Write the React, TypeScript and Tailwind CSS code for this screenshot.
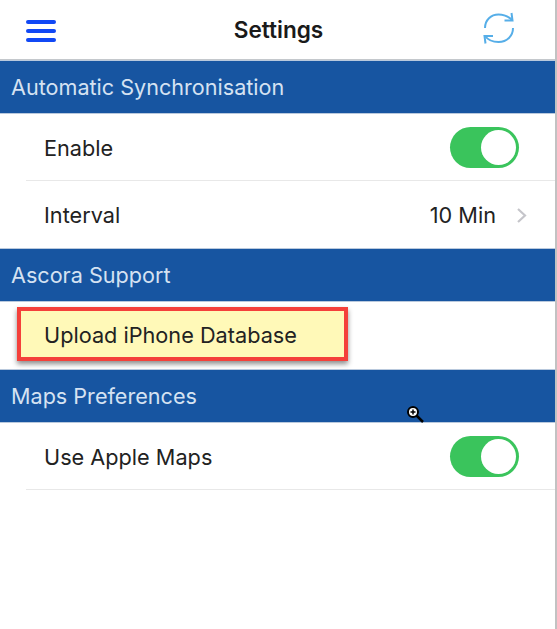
import React from 'react'

function Toggle() {
  return (
    <div className="mt-[1px] flex h-[41px] w-[69px] items-center justify-end rounded-full bg-[#3ac45c] p-[3px]">
      <div className="h-[35px] w-[35px] rounded-full bg-white" />
    </div>
  )
}

function SectionHeader({ title }: { title: string }) {
  return (
    <div className="flex h-[54px] items-center border-y border-[#b9c9dd] bg-[#1755a1] pl-[11px] text-[21.6px] text-[#d5e2f2]">
      {title}
    </div>
  )
}

export default function App() {
  return (
    <div className="relative h-[629px] w-[557px] overflow-hidden border-r-2 border-[#c2c2c2] bg-white font-['Inter','Liberation_Sans',sans-serif] text-[#222]">
      <header className="grid h-[60px] grid-cols-3 items-center border-b border-[#c4c8cc] pr-[40px] pl-[26px]">
        <svg width="30" height="24" viewBox="0 0 30 24" className="mt-[3px] text-[#1148f5]">
          <g fill="none" stroke="currentColor" strokeWidth="4" strokeLinecap="round">
            <path d="M2 3h26" />
            <path d="M2 12h26" />
            <path d="M2 21h26" />
          </g>
        </svg>
        <h1 className="justify-self-center pl-[16px] text-[22.6px] font-semibold whitespace-nowrap text-[#1a1a1a]">Settings</h1>
        <svg width="32" height="32" viewBox="0 0 32 32" className="mb-[3px] justify-self-end text-[#56aee8]">
          <g fill="none" stroke="currentColor" strokeWidth="2">
            <path d="M2 16C2 8 8 2.5 15.5 2.5c5.5 0 10 2 13.5 5.5" />
            <path d="M30 16c0 8-6 14-14.500 14-5.500 0-10.500-2-13.500-6" />
            <path d="M28.500 1l1 7.500h-8" />
            <path d="M2.500 31.500l-1-7.500h8.500" />
          </g>
        </svg>
      </header>

      <SectionHeader title="Automatic Synchronisation" />
      <div className="pl-[26px]">
        <div className="flex h-[67px] items-center justify-between border-b border-[#e8e8e8] pr-[36px] pl-[18px] text-[21.7px]">
          <span className="pt-[2px]">Enable</span>
          <Toggle />
        </div>
        <div className="flex h-[67px] items-center justify-between pr-[28px] pl-[18px] text-[21.7px]">
          <span className="pt-[2px]">Interval</span>
          <span className="flex items-center gap-[20px] pt-[2px]">
            10 Min
            <svg width="11" height="17" viewBox="0 0 11 17">
              <path d="M2 2l7 6.500L2 15" fill="none" stroke="#c5c5ca" strokeWidth="2.200" />
            </svg>
          </span>
        </div>
      </div>

      <SectionHeader title="Ascora Support" />
      <div className="relative h-[67px]">
        <div className="absolute top-[5px] left-[17px] flex h-[54px] w-[331px] items-center border-4 border-[#f4403a] bg-[#fff9b8] pt-[2px] pl-[23px] text-[21.7px] shadow-[0_3px_5px_rgba(0,0,0,0.45)]">
          Upload iPhone Database
        </div>
      </div>

      <SectionHeader title="Maps Preferences" />
      <div className="pl-[26px]">
        <div className="flex h-[67px] items-center justify-between border-b border-[#e8e8e8] pr-[36px] pl-[18px] text-[21.7px]">
          <span className="pt-[2px]">Use Apple Maps</span>
          <Toggle />
        </div>
      </div>

      {/* zoom cursor caught in the screenshot */}
      <svg width="18" height="18" viewBox="0 0 18 18" className="absolute top-[405px] left-[406px]">
        <path d="M10 10l7 7" stroke="#000" strokeWidth="2.500" />
        <circle cx="7" cy="7" r="5" fill="#fff" stroke="#000" strokeWidth="2" />
        <path d="M4.500 7h5M7 4.500v5" stroke="#000" strokeWidth="1.500" />
      </svg>
    </div>
  )
}
